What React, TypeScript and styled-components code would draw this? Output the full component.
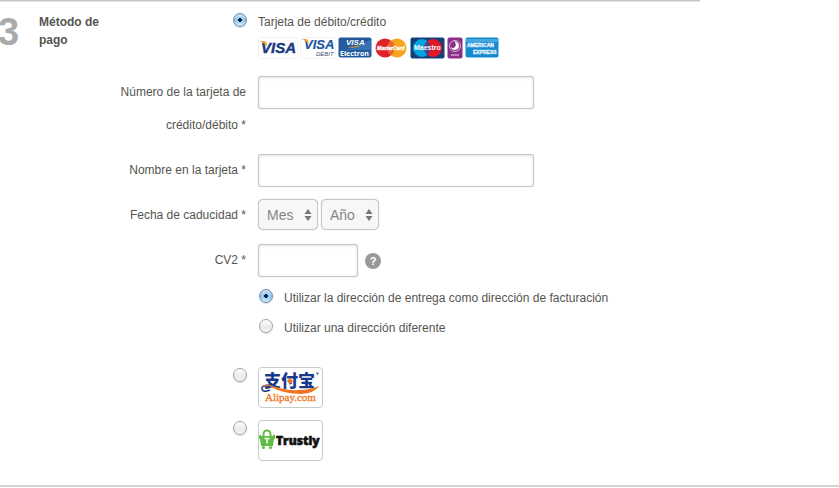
import React from "react";
import styled, { createGlobalStyle, css } from "styled-components";

const GlobalStyle = createGlobalStyle`
  *, *::before, *::after { box-sizing: border-box; }
  body {
    margin: 0;
    background: #fff;
    color: #555550;
    font-family: "Liberation Sans", Arial, Helvetica, sans-serif;
    font-size: 12px;
    line-height: 18px;
  }
`;

const Page = styled.main`
  border-bottom: 2px solid #d2d2d2;
  padding-bottom: 24px;
`;

const TopRule = styled.hr`
  width: calc(100% - 139px);
  height: 2px;
  margin: 0;
  border: 0;
  border-top: 1px solid #c4c4c4;
  background: #e4e4e4;
`;

const Section = styled.section`
  display: grid;
  grid-template-columns: 39px 80px minmax(0, 1fr);
  padding-top: 10px;
`;

const StepNumber = styled.span`
  margin-left: -2px;
  font-size: 38px;
  line-height: 40px;
  font-weight: bold;
  color: #aaa;
`;

const StepTitle = styled.h2`
  margin: 0;
  padding-top: 1px;
  font-size: 12px;
  line-height: 18px;
  font-weight: bold;
`;

const Form = styled.form`
  display: flex;
  flex-direction: column;
  gap: 12px;
`;

const Row = styled.div`
  display: grid;
  grid-template-columns: 127px minmax(0, 1fr);
  column-gap: 12px;
  align-items: start;
`;

const FieldLabel = styled.label`
  text-align: right;
  line-height: 33px;
`;

const Control = styled.div`
  display: flex;
  align-items: center;
  gap: 3px;
`;

const fieldFrame = css`
  border: 1px solid #c6c6c6;
  border-radius: 3px;
  box-shadow: inset 0 1px 3px #e4e4e4, 0 0 1px #ccc;
  font-family: inherit;
  font-size: 14px;
`;

const TextInput = styled.input<{ $short?: boolean }>`
  ${fieldFrame}
  width: ${({ $short }) => ($short ? 100 : 276)}px;
  max-width: 100%;
  height: 33px;
  padding: 0 8px;
  background: #fff;
`;

const SelectBox = styled.span`
  position: relative;
  display: inline-flex;

  svg {
    position: absolute;
    right: 6px;
    top: 9px;
    pointer-events: none;
  }
`;

const Select = styled.select`
  ${fieldFrame}
  appearance: none;
  height: 31px;
  padding: 0 23px 0 8px;
  border-radius: 5px;
  box-shadow: 0 0 1px #bbb;
  background: #f7f7f7;
  color: #858585;
`;

const HelpButton = styled.button`
  width: 16px;
  height: 16px;
  margin-left: 4px;
  padding: 0;
  border: 0;
  border-radius: 50%;
  background: #999;
  color: #fff;
  font: bold 11px/16px "Liberation Sans", Arial, sans-serif;
`;

const Radio = styled.input`
  appearance: none;
  flex: none;
  width: 14px;
  height: 14px;
  margin: 0;
  border: 1px solid #a2a2a2;
  border-radius: 50%;
  background: linear-gradient(#fff, #e9e9e9 60%, #f8f8f8);
  box-shadow: 0 1px 1px #ddd;

  &:checked {
    border-color: #6d8cab;
    background:
      radial-gradient(circle, #10203a 0 2px, transparent 2px),
      linear-gradient(#d0e4f8, #8fc2f0 50%, #cdeeff);
  }
`;

const MethodRadio = styled(Radio)`
  justify-self: end;
  margin: 1px -1px 0 0;
`;

const MethodName = styled.label`
  display: block;
  padding-top: 1px;
`;

const CardList = styled.div`
  display: flex;
  gap: 2px;
  padding: 6px 0 5px;

  svg { display: block; flex: none; }
`;

const AddressOptions = styled.div`
  display: flex;
  flex-direction: column;
  margin: -6px 0 12px;
`;

const AddressOption = styled.label`
  display: flex;
  align-items: center;
  gap: 11px;
  padding-left: 1px;
  line-height: 30px;

  input { margin-bottom: 4px; }
`;

const LogoLabel = styled.label`
  display: block;
  width: 65px;
  height: 41px;
  border: 1px solid #c5cccc;
  border-radius: 4px;
  overflow: hidden;

  svg { display: block; }
`;

const sans = "Liberation Sans, Arial, sans-serif";

const VisaLogo = () => (
  <svg width="40" height="22" role="img" aria-label="Visa">
    <rect x="0.5" y="0.5" width="39" height="21" rx="2" fill="#fff" stroke="#f1f1f1" />
    <text x="3" y="16" fontFamily={sans} fontSize="15" fontWeight="bold" fontStyle="italic" fill="#17377d" stroke="#17377d" strokeWidth="0.4">VISA</text>
    <path d="M2 4h4q2 0 2.500 2l1 4Q6 6 2 4Z" fill="#f0a02c" />
  </svg>
);

const VisaDebitLogo = () => (
  <svg width="36" height="22" role="img" aria-label="Visa Debit">
    <rect x="0.5" y="0.5" width="35" height="21" rx="2" fill="#fff" stroke="#f1f1f1" />
    <text x="4" y="12" fontFamily={sans} fontSize="13" fontWeight="bold" fontStyle="italic" fill="#1b58a0" stroke="#1b58a0" strokeWidth="0.2">VISA</text>
    <path d="M2 2h4q2 0 2 2l1 3Q6 4 2 2Z" fill="#f0a02c" />
    <text x="16" y="19" fontFamily={sans} fontSize="6" fontStyle="italic" fill="#41506f">DEBIT</text>
  </svg>
);

const ElectronLogo = () => (
  <svg width="34" height="22" role="img" aria-label="Visa Electron">
    <rect x="0.5" y="0.5" width="33" height="20" rx="2" fill="#235b9e" />
    <path d="M1 13Q17 13 28 5L33 3V13Z" fill="#3472b4" />
    <path d="M9 10q8 0 15-2-6 4-15 2Z" fill="#f0a02c" />
    <text x="8" y="8" fontFamily={sans} fontSize="8" fontWeight="bold" fontStyle="italic" fill="#fff">VISA</text>
    <text x="2" y="19" fontFamily="Open Sans, sans-serif" fontSize="7" fontWeight="bold" fill="#fff">Electron</text>
  </svg>
);

const MasterCardLogo = () => (
  <svg width="34" height="22" role="img" aria-label="MasterCard">
    <circle cx="11" cy="11" r="9.5" fill="#e0212d" />
    <circle cx="23" cy="11" r="9.5" fill="#f6a51f" />
    <path d="M17 3.500a9.500 9.500 0 0 1 0 15 9.500 9.500 0 0 1 0-15Z" fill="#ec652a" />
    <text x="3" y="13" fontFamily={sans} fontSize="5" fontWeight="bold" fontStyle="italic" fill="#fff" stroke="#fff" strokeWidth="0.3">MasterCard</text>
  </svg>
);

const MaestroLogo = () => (
  <svg width="35" height="22" role="img" aria-label="Maestro">
    <rect x="0.5" y="0.5" width="34" height="21" rx="2" fill="#153e7b" />
    <circle cx="12" cy="11" r="9" fill="#00a5df" />
    <circle cx="23" cy="11" r="9" fill="#e2182a" />
    <path d="M17.500 4a9 9 0 0 1 0 14 9 9 0 0 1 0-14Z" fill="#4a4188" />
    <text x="4" y="13" fontFamily={sans} fontSize="7" fontWeight="bold" fill="#fff">Maestro</text>
  </svg>
);

const SoloLogo = () => (
  <svg width="16" height="22" role="img" aria-label="Solo">
    <rect x="0.5" y="0.5" width="15" height="21" rx="2" fill="#8b3089" />
    <circle cx="8" cy="9" r="5.5" fill="none" stroke="#d9b0d8" strokeWidth="1" />
    <path d="M7 4q5 1 5 5t-5 4q-3-1-3-3 2 2 4 0 2-3-1-6Z" fill="#fff" />
    <path d="M4 18h8" stroke="#d2a1d1" strokeWidth="2" strokeDasharray="1.500 0.600" />
  </svg>
);

const AmexLogo = () => (
  <svg width="34" height="22" role="img" aria-label="American Express">
    <rect x="0.5" y="0.5" width="33" height="20" rx="2" fill="#1689cf" />
    <path d="M1 2h32v3H1Z" fill="#44a8df" />
    <g fontFamily={sans} fontSize="5" fontWeight="bold" fill="#e8f6ff" stroke="#e8f6ff" strokeWidth="0.3">
      <text x="2" y="10">AMERICAN</text>
      <text x="8" y="17">EXPRESS</text>
    </g>
  </svg>
);

const AlipayLogo = () => (
  <svg width="63" height="39" role="img" aria-label="Alipay.com">
    <text x="5" y="19" fontFamily="Noto Sans CJK SC, sans-serif" fontSize="17" fontWeight="900" fill="#18398b">支付宝</text>
    <path d="M12 17Q2 17 3 21q1 4 8 1" fill="none" stroke="#18398b" strokeWidth="1.5" />
    <path d="M3 20q1-4 8-3 15 6 29 5 11 0 20-4-4 7-18 8-18 0-32-8-5-1-7 2Z" fill="#ef7524" />
    <path d="m31 10 3 3-3 3-3-3Z" fill="#ef7524" />
    <path d="M57 5h3M58.500 5v2" stroke="#18398b" strokeWidth="0.7" />
    <text x="6" y="33" fontFamily="Liberation Serif, serif" fontSize="11" fill="#ef7524" stroke="#ef7524" strokeWidth="0.3">Alipay.com</text>
  </svg>
);

const TrustlyLogo = () => (
  <svg width="63" height="39" role="img" aria-label="Trustly">
    <path d="M4.500 15v-2a3.500 3.500 0 0 1 7 0v2" fill="none" stroke="#5fbd45" strokeWidth="2" />
    <path d="M0 14h2v1h12v-1h2v4h-1l-1 7H2L1 18H0Z" fill="#5fbd45" />
    <circle cx="4.5" cy="26.5" r="1.600" fill="#5fbd45" />
    <circle cx="11.5" cy="26.5" r="1.600" fill="#5fbd45" />
    <path d="M5.500 17.500h5M8 17.500v5" stroke="#fff" strokeWidth="1.500" />
    <text x="17" y="24" fontFamily="Open Sans, sans-serif" fontSize="12" fontWeight="800" fill="#111" stroke="#111" strokeWidth="0.6">Trustly</text>
  </svg>
);

const Arrows = () => (
  <svg width="8" height="14" aria-hidden="true">
    <path d="M4 1 7.500 6H0.500ZM4 13 0.500 8h7Z" fill="#777" />
  </svg>
);

const months = Array.from({ length: 12 }, (_, i) => String(i + 1).padStart(2, "0"));
const years = ["14", "15", "16", "17", "18", "19", "20"];

function Picker({ id, name, values }: { id: string; name: string; values: string[] }) {
  return (
    <SelectBox>
      <Select id={id} aria-label={name} defaultValue="">
        <option value="">{name}</option>
        {values.map((v) => (
          <option key={v}>{v}</option>
        ))}
      </Select>
      <Arrows />
    </SelectBox>
  );
}

export default function App() {
  return (
    <>
      <GlobalStyle />
      <Page>
        <TopRule />
        <Section>
          <StepNumber>3</StepNumber>
          <StepTitle>Método de pago</StepTitle>
          <Form>
            <Row>
              <MethodRadio type="radio" name="method" id="card" defaultChecked />
              <div>
                <MethodName htmlFor="card">Tarjeta de débito/crédito</MethodName>
                <CardList>
                  <VisaLogo />
                  <VisaDebitLogo />
                  <ElectronLogo />
                  <MasterCardLogo />
                  <MaestroLogo />
                  <SoloLogo />
                  <AmexLogo />
                </CardList>
              </div>
            </Row>
            <Row>
              <FieldLabel htmlFor="number">Número de la tarjeta de crédito/débito *</FieldLabel>
              <Control><TextInput id="number" type="text" /></Control>
            </Row>
            <Row>
              <FieldLabel htmlFor="holder">Nombre en la tarjeta *</FieldLabel>
              <Control><TextInput id="holder" type="text" /></Control>
            </Row>
            <Row>
              <FieldLabel htmlFor="month">Fecha de caducidad *</FieldLabel>
              <Control>
                <Picker id="month" name="Mes" values={months} />
                <Picker id="year" name="Año" values={years} />
              </Control>
            </Row>
            <Row>
              <FieldLabel htmlFor="cv2">CV2 *</FieldLabel>
              <Control>
                <TextInput id="cv2" type="text" $short />
                <HelpButton type="button">?</HelpButton>
              </Control>
            </Row>
            <Row>
              <span />
              <AddressOptions>
                <AddressOption>
                  <Radio type="radio" name="address" defaultChecked />
                  Utilizar la dirección de entrega como dirección de facturación
                </AddressOption>
                <AddressOption>
                  <Radio type="radio" name="address" />
                  Utilizar una dirección diferente
                </AddressOption>
              </AddressOptions>
            </Row>
            <Row>
              <MethodRadio type="radio" name="method" id="alipay" />
              <LogoLabel htmlFor="alipay"><AlipayLogo /></LogoLabel>
            </Row>
            <Row>
              <MethodRadio type="radio" name="method" id="trustly" />
              <LogoLabel htmlFor="trustly"><TrustlyLogo /></LogoLabel>
            </Row>
          </Form>
        </Section>
      </Page>
    </>
  );
}
